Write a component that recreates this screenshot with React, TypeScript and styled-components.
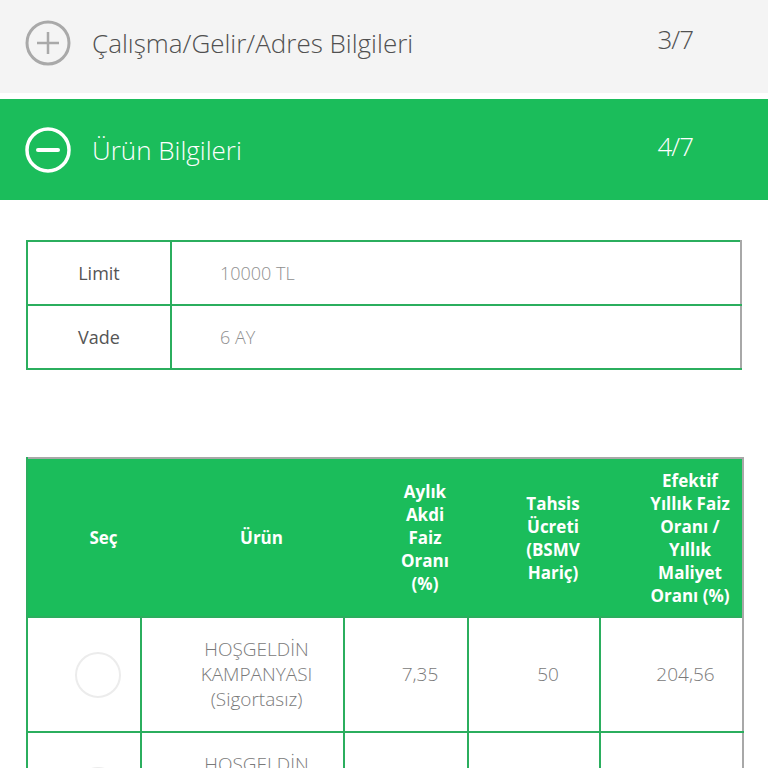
import styled, { createGlobalStyle } from 'styled-components';

const GlobalStyle = createGlobalStyle`
    html, body {
        margin: 0;
        padding: 0;
        background: #ffffff;
        font-family: 'Open Sans', 'Noto Sans', sans-serif;
    }
`;

const Page = styled.div`
    width: 768px;
    height: 768px;
    overflow: hidden;
    background: #ffffff;
`;

const StepBar = styled.div<{ $active?: boolean }>`
    display: flex;
    align-items: center;
    height: ${(p) => (p.$active ? '101px' : '93px')};
    margin-bottom: ${(p) => (p.$active ? '0' : '6px')};
    padding: ${(p) => (p.$active ? '0 75px 0 24px' : '0 75px 7px 24px')};
    box-sizing: border-box;
    background: ${(p) => (p.$active ? '#1bbd5b' : '#f4f4f4')};
    color: ${(p) => (p.$active ? '#ffffff' : '#505050')};
`;

const StepTitle = styled.div`
    flex: 1;
    margin-left: 20px;
    font-size: 26px;
    font-weight: 300;
    line-height: 1;
`;

const StepCount = styled.div`
    font-size: 26px;
    font-weight: 300;
    letter-spacing: -1px;
    margin-top: -8px;
`;

const Content = styled.div`
    padding: 40px 26px 0 26px;
`;

const InfoTable = styled.table`
    width: 716px;
    border-collapse: collapse;
    border-top: 2px solid #a8a8a8;
    border-right: 2px solid #a8a8a8;
    margin-bottom: 87px;
`;

const InfoLabel = styled.td`
    width: 142px;
    height: 62px;
    padding: 0;
    border: 2px solid #2bae5e;
    text-align: center;
    font-size: 18px;
    color: #555555;
`;

const InfoValue = styled.td`
    padding: 0 0 0 48px;
    border: 2px solid #2bae5e;
    border-right-color: #a8a8a8;
    font-size: 18px;
    font-weight: 300;
    color: #8f8f8f;
`;

const ProductTable = styled.table`
    width: 716px;
    border-collapse: collapse;
    border-top: 2px solid #a8a8a8;
    border-right: 2px solid #a8a8a8;
    table-layout: fixed;
`;

const HeadCell = styled.th<{ $w: number }>`
    width: ${(p) => p.$w}px;
    height: 159px;
    box-sizing: border-box;
    padding: 4px 6px 4px 44px;
    background: #1bbd5b;
    color: #ffffff;
    font-size: 17px;
    font-weight: 700;
    line-height: 23px;
    text-align: center;
    &:first-child {
        border-left: 2px solid #2bae5e;
    }
`;

const BodyCell = styled.td`
    height: 109px;
    padding: 2px 6px 2px 34px;
    border: 2px solid #2bae5e;
    font-size: 19px;
    line-height: 25px;
    font-weight: 300;
    color: #7a7a7a;
    text-align: center;
    &:last-child {
        border-right-color: #a8a8a8;
    }
`;

const Radio = styled.span`
    display: inline-block;
    width: 42px;
    height: 42px;
    border-radius: 50%;
    border: 2px solid #ececec;
    vertical-align: middle;
`;

const PlusIcon = () => (
    <svg width="48" height="48" viewBox="0 0 48 48">
        <circle cx="24" cy="24" r="21" fill="none" stroke="#a9a9a9" strokeWidth="3" />
        <path d="M24 13 V35 M13 24 H35" stroke="#a9a9a9" strokeWidth="2.5" />
    </svg>
);

const MinusIcon = () => (
    <svg width="48" height="48" viewBox="0 0 48 48">
        <circle cx="24" cy="24" r="21" fill="none" stroke="#ffffff" strokeWidth="3.5" />
        <path d="M14 24 H34" stroke="#ffffff" strokeWidth="4" strokeLinecap="round" />
    </svg>
);

const products = [
    { name: ['HOŞGELDİN', 'KAMPANYASI', '(Sigortasız)'], rate: '7,35', fee: '50', cost: '204,56' },
    { name: ['HOŞGELDİN', 'KAMPANYASI', '(Sigortalı)'], rate: '7,35', fee: '50', cost: '204,56' },
];

export default function App() {
    return (
        <Page>
            <GlobalStyle />
            <StepBar>
                <PlusIcon />
                <StepTitle>Çalışma/Gelir/Adres Bilgileri</StepTitle>
                <StepCount>3/7</StepCount>
            </StepBar>
            <StepBar $active>
                <MinusIcon />
                <StepTitle>Ürün Bilgileri</StepTitle>
                <StepCount>4/7</StepCount>
            </StepBar>
            <Content>
                <InfoTable>
                    <tbody>
                        <tr>
                            <InfoLabel>Limit</InfoLabel>
                            <InfoValue>10000 TL</InfoValue>
                        </tr>
                        <tr>
                            <InfoLabel>Vade</InfoLabel>
                            <InfoValue>6 AY</InfoValue>
                        </tr>
                    </tbody>
                </InfoTable>
                <ProductTable>
                    <thead>
                        <tr>
                            <HeadCell $w={114}>Seç</HeadCell>
                            <HeadCell $w={203}>Ürün</HeadCell>
                            <HeadCell $w={124}>Aylık Akdi Faiz Oranı (%)</HeadCell>
                            <HeadCell $w={132}>Tahsis Ücreti (BSMV Hariç)</HeadCell>
                            <HeadCell $w={143}>Efektif Yıllık Faiz Oranı / Yıllık Maliyet Oranı (%)</HeadCell>
                        </tr>
                    </thead>
                    <tbody>
                        {products.map((p, i) => (
                            <tr key={i}>
                                <BodyCell>
                                    <Radio />
                                </BodyCell>
                                <BodyCell>
                                    {p.name.map((line) => (
                                        <div key={line}>{line}</div>
                                    ))}
                                </BodyCell>
                                <BodyCell>{p.rate}</BodyCell>
                                <BodyCell>{p.fee}</BodyCell>
                                <BodyCell>{p.cost}</BodyCell>
                            </tr>
                        ))}
                    </tbody>
                </ProductTable>
            </Content>
        </Page>
    );
}
